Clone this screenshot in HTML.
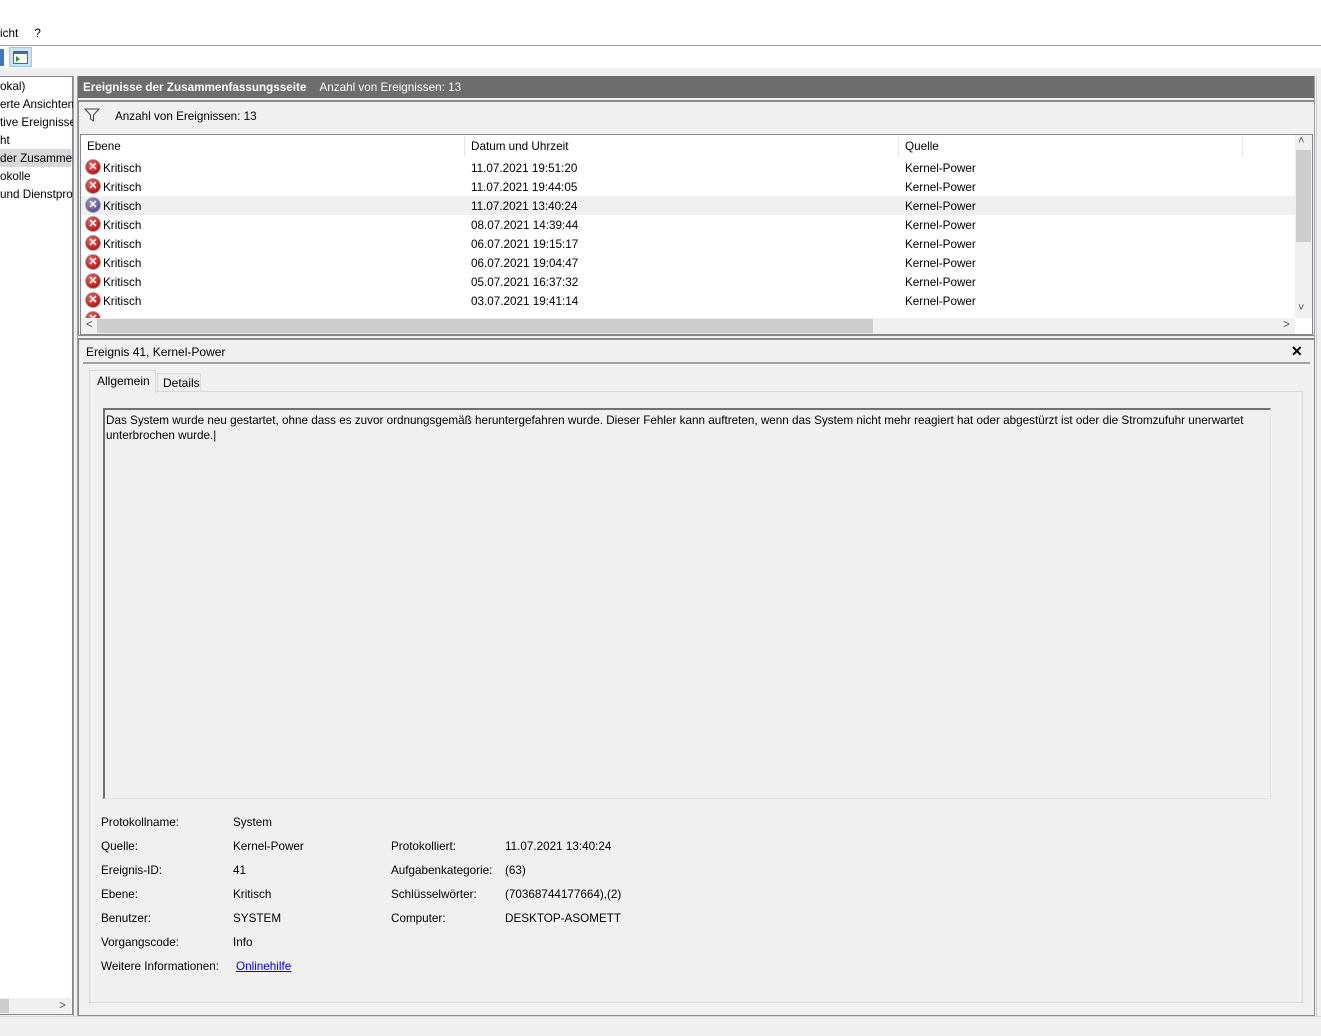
<!DOCTYPE html>
<html><head><meta charset="utf-8"><style>
*{box-sizing:border-box;margin:0;padding:0}
body{width:1321px;height:1036px;position:relative;background:#f0f0f0;font-family:"Liberation Sans",sans-serif;font-size:11.7px;color:#000;overflow:hidden}
.a{position:absolute;white-space:nowrap}
.x{width:16px;height:16px;border-radius:50%;background:radial-gradient(circle at 40% 35%,#f07070,#c42020 60%,#8a1010);border:1px solid #aaa;display:flex;align-items:center;justify-content:center;color:#fff;font-size:11px;font-weight:bold;line-height:1}
.xp{background:radial-gradient(circle at 40% 35%,#a89ac8,#6a5a98 60%,#4a3a70)}
</style></head><body>
<div class="a" style="left:0;top:0;width:1321px;height:45px;background:#fff"></div>
<div class="a" style="left:0;top:27px">icht&nbsp;&nbsp;&nbsp;&nbsp;&nbsp;?</div>
<div class="a" style="left:0;top:45px;width:1321px;height:1px;background:#a0a0a0"></div>
<div class="a" style="left:0;top:46px;width:1321px;height:22px;background:#fff"></div>
<div class="a" style="left:0;top:49px;width:4px;height:17px;background:#3a78c8"></div>
<div class="a" style="left:9px;top:47px;width:23px;height:20px;background:#cce4f7;border:1px solid #99c8f0"></div>
<div class="a" style="left:13px;top:51px;width:15px;height:13px;border:1px solid #4a6a8a;background:#fff"></div>
<div class="a" style="left:13px;top:51px;width:15px;height:3px;background:#4a6a8a"></div>
<div class="a" style="left:16px;top:56px;width:0;height:0;border-left:4px solid #2a9a2a;border-top:3px solid transparent;border-bottom:3px solid transparent"></div>
<!-- left pane -->
<div class="a" style="left:0;top:76px;width:73px;height:939px;background:#fff;border:1px solid #828790;border-left:none"></div>
<div class="a" style="left:0;top:149px;width:71px;height:18px;background:#d9d9d9"></div>
<div class="a" style="left:0;top:78px;line-height:18px">okal)<br>erte Ansichten<br>tive Ereignisse<br>ht<br>der Zusammen<br>okolle<br>und Dienstpro</div>
<div class="a" style="left:0;top:998px;width:71px;height:16px;background:#f0f0f0"></div>
<div class="a" style="left:0;top:999px;width:9px;height:14px;background:#cdcdcd"></div>
<div class="a" style="left:59px;top:999px;color:#555">&gt;</div>
<div class="a" style="left:73px;top:76px;width:5px;height:940px;background:#f0f0f0;border-left:1px solid #a0a0a0;border-right:1px solid #a0a0a0"></div>
<!-- header bar -->
<div class="a" style="left:78px;top:76px;width:1237px;height:22px;background:#6d6d6d;color:#fff;line-height:22px;padding-left:5px;padding-top:1px"><b>Ereignisse der Zusammenfassungsseite</b>&nbsp;&nbsp;&nbsp;&nbsp;Anzahl von Ereignissen: 13</div>
<div class="a" style="left:78px;top:100px;width:1237px;height:236px;border:1px solid #8a8a8a;border-top:2px solid #8a8a8a"></div>
<svg class="a" style="left:84px;top:108px" width="16" height="14"><path d="M1 1H15L9.5 7V13L6.5 11V7Z" fill="none" stroke="#444"/></svg>
<div class="a" style="left:115px;top:110px">Anzahl von Ereignissen: 13</div>
<div class="a" style="left:80px;top:134px;width:1233px;height:201px;background:#fff;border:1px solid #828790"></div>
<div class="a" style="left:464px;top:136px;width:1px;height:20px;background:#e5e5e5"></div>
<div class="a" style="left:898px;top:136px;width:1px;height:20px;background:#e5e5e5"></div>
<div class="a" style="left:1242px;top:136px;width:1px;height:20px;background:#e5e5e5"></div>
<div class="a" style="left:87px;top:140px">Ebene</div>
<div class="a" style="left:471px;top:140px">Datum und Uhrzeit</div>
<div class="a" style="left:905px;top:140px">Quelle</div>
<div class="a" style="left:81px;top:196px;width:1214px;height:19px;background:#f0f0f0"></div>
<div id="rows"></div>
<div class="a" style="left:1295px;top:135px;width:17px;height:183px;background:#f0f0f0"></div>
<div class="a" style="left:1296px;top:150px;width:15px;height:92px;background:#cdcdcd"></div>
<div class="a" style="left:1298px;top:135px;color:#555;font-size:11px">&#708;</div>
<div class="a" style="left:1298px;top:302px;color:#555;font-size:11px">&#709;</div>
<div class="a" style="left:1314px;top:76px;width:1px;height:940px;background:#a0a0a0"></div>
<div class="a" style="left:1316px;top:76px;width:1px;height:940px;background:#d0d0d0"></div>
<!-- detail -->
<div class="a" style="left:78px;top:338px;width:1237px;height:678px;border:1px solid #8a8a8a;border-top:2px solid #8a8a8a"></div>
<div class="a" style="left:86px;top:345px;font-size:12px">Ereignis 41, Kernel-Power</div>
<div class="a" style="left:1291px;top:343px;font-size:14px;font-weight:bold">&#x2715;</div>
<div class="a" style="left:83px;top:362px;width:1227px;height:2px;background:#a0a0a0"></div>
<div class="a" style="left:89px;top:391px;width:1214px;height:612px;border:1px solid #d9d9d9"></div>
<div class="a" style="left:89px;top:370px;width:67px;height:23px;background:#f0f0f0;border:1px solid #d9d9d9;border-bottom:none;padding:3px 0 0 7px;font-size:12px">Allgemein</div>
<div class="a" style="left:157px;top:373px;width:44px;height:19px;background:#f0f0f0;border:1px solid #d9d9d9;padding:2px 0 0 5px;font-size:12px">Details</div>
<div class="a" style="left:103px;top:408px;width:1168px;height:391px;border:1px solid #a0a0a0;border-top:2px solid #707070;border-left:2px solid #707070;border-right:1px solid #e3e3e3;border-bottom:1px solid #e3e3e3"></div>
<div class="a" style="left:106px;top:413px;line-height:15px;white-space:normal;width:1160px">Das System wurde neu gestartet, ohne dass es zuvor ordnungsgemäß heruntergefahren wurde. Dieser Fehler kann auftreten, wenn das System nicht mehr reagiert hat oder abgestürzt ist oder die Stromzufuhr unerwartet unterbrochen wurde.|</div>
<div class="a" style="left:101px;top:811px;line-height:24px">Protokollname:<br>Quelle:<br>Ereignis-ID:<br>Ebene:<br>Benutzer:<br>Vorgangscode:<br>Weitere Informationen:</div>
<div class="a" style="left:233px;top:811px;line-height:24px">System<br>Kernel-Power<br>41<br>Kritisch<br>SYSTEM<br>Info<br></div>
<div class="a" style="left:236px;top:955px;line-height:24px;color:#0000ee;text-decoration:underline">Onlinehilfe</div>
<div class="a" style="left:391px;top:835px;line-height:24px">Protokolliert:<br>Aufgabenkategorie:<br>Schlüsselwörter:<br>Computer:</div>
<div class="a" style="left:505px;top:835px;line-height:24px">11.07.2021 13:40:24<br>(63)<br>(70368744177664),(2)<br>DESKTOP-ASOMETT</div>
<div class="a" style="left:0;top:1016px;width:1321px;height:1px;background:#dadada"></div>
<script>
var d=["11.07.2021 19:51:20","11.07.2021 19:44:05","11.07.2021 13:40:24","08.07.2021 14:39:44","06.07.2021 19:15:17","06.07.2021 19:04:47","05.07.2021 16:37:32","03.07.2021 19:41:14"];
var h="";
for(var i=0;i<9;i++){var y=158+i*19;
h+='<div class="a x'+(i==2?' xp':'')+'" style="left:85px;top:'+(y+1)+'px">&#x2715;</div>';
if(i<8){h+='<div class="a" style="left:103px;top:'+(y+4)+'px">Kritisch</div><div class="a" style="left:471px;top:'+(y+4)+'px">'+d[i]+'</div><div class="a" style="left:905px;top:'+(y+4)+'px">Kernel-Power</div>';}}
document.getElementById("rows").innerHTML=h;
</script>
<div class="a" style="left:81px;top:318px;width:1214px;height:16px;background:#f0f0f0"></div>
<div class="a" style="left:97px;top:319px;width:776px;height:14px;background:#cdcdcd"></div>
<div class="a" style="left:86px;top:318px;color:#555">&lt;</div>
<div class="a" style="left:1283px;top:318px;color:#555">&gt;</div>
</body></html>
